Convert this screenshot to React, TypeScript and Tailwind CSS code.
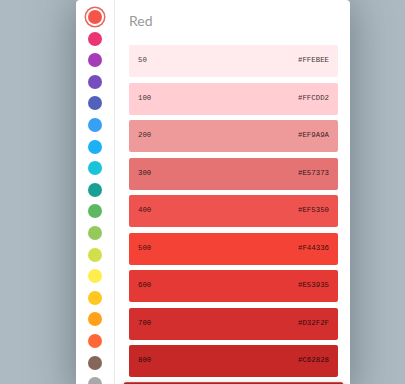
import React from 'react';

const dots = [
  '#F44336', '#E91E63', '#9C27B0', '#673AB7', '#3F51B5', '#2196F3',
  '#03A9F4', '#00BCD4', '#009688', '#4CAF50', '#8BC34A', '#CDDC39',
  '#FFEB3B', '#FFC107', '#FF9800', '#FF5722', '#795548', '#9E9E9E',
];

const shades = [
  { name: '50', hex: '#FFEBEE' },
  { name: '100', hex: '#FFCDD2' },
  { name: '200', hex: '#EF9A9A' },
  { name: '300', hex: '#E57373' },
  { name: '400', hex: '#EF5350' },
  { name: '500', hex: '#F44336' },
  { name: '600', hex: '#E53935' },
  { name: '700', hex: '#D32F2F' },
  { name: '800', hex: '#C62828' },
  { name: '900', hex: '#B71C1C' },
];

const App: React.FC = () => {
  return (
    <div className="h-[384px] w-full overflow-hidden bg-[#adbac1] pl-[76px]">
      <div className="flex h-[400px] w-[274px] rounded-t-[4px] bg-white shadow-[0_0_45px_rgba(45,60,70,0.5)]">
        {/* colour picker column */}
        <div className="flex w-[39px] flex-col items-center gap-[7.6px] border-r border-[#e8e8e8] pt-[10px]">
          {dots.map((c, i) => (
            <div
              key={c}
              className={`h-[14px] w-[14px] shrink-0 rounded-full opacity-90 ${
                i === 0 ? 'shadow-[0_0_0_2px_#fff,0_0_0_3.5px_#e0584f]' : ''
              }`}
              style={{ backgroundColor: c }}
            />
          ))}
        </div>

        {/* shades */}
        <div className="flex-1 pl-[14px] pr-[12px] pt-[11px]">
          <h2 className="h-[20px] text-[14px] leading-[20px] text-[#9a9a9a] font-['Lato',sans-serif]">
            Red
          </h2>
          <div className="mt-[14px] flex flex-col gap-[5.5px]">
            {shades.map(s => (
              <div
                key={s.name}
                className={`flex h-[32px] shrink-0 items-center justify-between rounded-[2px] px-[9px] font-['Liberation_Mono',monospace] text-[7.4px] text-black/80 ${
                  s.name === '900' ? 'scale-[1.05] shadow-[0_2px_6px_rgba(0,0,0,0.3)]' : ''
                }`}
                style={{ backgroundColor: s.hex }}
              >
                <span>{s.name}</span>
                <span>{s.hex}</span>
              </div>
            ))}
          </div>
        </div>
      </div>
    </div>
  );
};

export default App;
